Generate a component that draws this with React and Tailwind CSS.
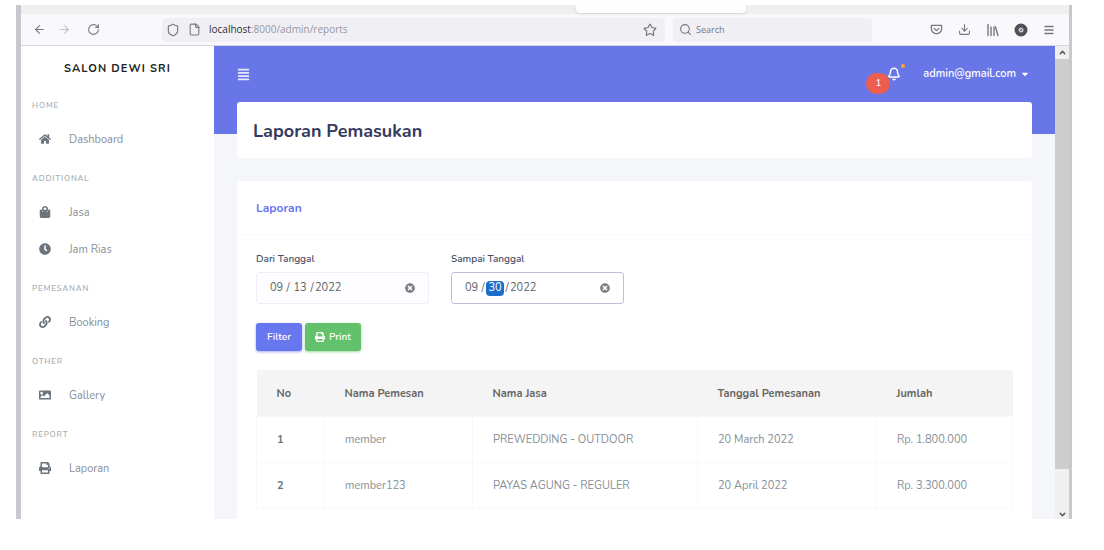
import {
  FaHome, FaShoppingBag, FaClock, FaLink, FaImage, FaPrint, FaAlignJustify, FaCaretDown, FaTimesCircle,
} from "react-icons/fa";
import {
  ArrowLeft, ArrowRight, RotateCw, Shield, File, Star, Search, Download, Menu, Bell, ChevronUp, ChevronDown,
} from "lucide-react";

const sections = [
  { title: "HOME", items: [{ name: "Dashboard", Icon: FaHome }] },
  { title: "ADDITIONAL", items: [{ name: "Jasa", Icon: FaShoppingBag }, { name: "Jam Rias", Icon: FaClock }] },
  { title: "PEMESANAN", items: [{ name: "Booking", Icon: FaLink }] },
  { title: "OTHER", items: [{ name: "Gallery", Icon: FaImage }] },
  { title: "REPORT", items: [{ name: "Laporan", Icon: FaPrint }] },
];

const rows = [
  ["1", "member", "PREWEDDING - OUTDOOR", "20 March 2022", "Rp. 1.800.000"],
  ["2", "member123", "PAYAS AGUNG - REGULER", "20 April 2022", "Rp. 3.300.000"],
];

function BrowserBar() {
  return (
    <div className="font-['Open_Sans',sans-serif]">
      <div className="flex h-[9px] bg-[#efefef]">
        <div className="w-[53%]" />
        <div className="mb-px w-[170px] rounded-b-sm bg-white shadow-sm" />
      </div>
      <div className="flex h-8 items-center border-b border-[#d5d5df] bg-[#f9f9fb] text-[#77777f]">
        <div className="flex w-[141px] items-center gap-3 pl-3">
          <button aria-label="Back"><ArrowLeft size={13} /></button>
          <button aria-label="Forward" className="text-[#c2c2c8]"><ArrowRight size={13} /></button>
          <button aria-label="Reload" className="ml-1"><RotateCw size={13} /></button>
        </div>
        <div className="flex h-6 flex-1 items-center gap-2 rounded-sm bg-[#f0f0f4] px-1">
          <Shield size={14} />
          <File size={13} />
          <a href="#url" className="flex-1 text-[10px] text-[#96969e]">
            <span className="text-[#2b2b33]">localhost</span>:8000/admin/reports
          </a>
          <button aria-label="Bookmark" className="mr-1"><Star size={14} /></button>
        </div>
        <label className="ml-2 flex h-6 w-[199px] items-center gap-1 rounded-sm bg-[#f0f0f4] pl-1.5">
          <Search size={13} />
          <input aria-label="Search" placeholder="Search" className="w-32 bg-transparent text-[9px] outline-none placeholder:text-[#77777f]" />
        </label>
        <div className="ml-[58px] flex items-center gap-[15px] pr-[14px]">
          <button aria-label="Pocket">
            <svg width="13" height="13" viewBox="0 0 14 14" fill="none" stroke="currentColor" strokeWidth="1.4" strokeLinecap="round" strokeLinejoin="round">
              <path d="M1.500 2.500h11v4a5.500 5 0 0 1-11 0z" /><path d="M4.500 6 7 8.200 9.500 6" />
            </svg>
          </button>
          <button aria-label="Downloads"><Download size={13} /></button>
          <button aria-label="Library">
            <svg width="13" height="14" viewBox="0 0 13 14" fill="none" stroke="currentColor" strokeWidth="1.4" strokeLinecap="round">
              <path d="M2 1.500v11M5 4v8.500M8 4v8.500M9.500 4l2.500 8.500" />
            </svg>
          </button>
          <button aria-label="Account">
            <svg width="14" height="14" viewBox="0 0 14 14">
              <circle cx="7" cy="7" r="6.500" fill="#505058" /><circle cx="7" cy="7" r="2.500" fill="#c9c9cf" />
              <path d="M5.800 8.300 8.200 5.700" stroke="#505058" />
            </svg>
          </button>
          <button aria-label="Menu"><Menu size={12} strokeWidth={3} /></button>
        </div>
      </div>
    </div>
  );
}

function Sidebar() {
  return (
    <nav className="w-[193px] shrink-0 bg-white">
      <h2 className="pb-[9px] pt-4 text-center text-[11px] font-bold leading-[14px] tracking-widest text-[#222]">SALON DEWI SRI</h2>
      {sections.map(({ title, items }) => (
        <section key={title}>
          <h3 className="pb-[7px] pl-[11px] pt-[13px] text-[8px] font-semibold leading-4 tracking-widest text-[#a9b0b5]">{title}</h3>
          {items.map(({ name, Icon }) => (
            <a key={name} href={`#${name}`} className="flex h-[37px] items-center pl-[18px] pt-0.5 text-[11px] text-[#868e96]">
              <Icon size={12} className="mb-1 mr-[18px] text-[#6c757d]" />
              {name}
            </a>
          ))}
        </section>
      ))}
    </nav>
  );
}

function DateField({ id, label, month, day, year, active }) {
  return (
    <div className="w-[173px]">
      <label htmlFor={id} className="block text-[10px] font-semibold leading-4 text-[#4a4f66]">{label}</label>
      <div className={`mt-[5px] flex h-8 items-center rounded-[3px] border px-[13px] text-[11px] text-[#5c6268] ${active ? "border-[#bcc0e0] bg-white" : "border-[#eceef8] bg-[#fdfdff]"}`}>
        <input id={id} defaultValue={month} className="w-[15px] bg-transparent outline-none" />
        <span className="w-[6px] text-center">/</span>
        <input aria-label={`${label} day`} defaultValue={day} className={`h-[15px] w-[18px] text-center outline-none ${active ? "rounded-sm bg-[#1a6fc9] text-white" : "bg-transparent"}`} />
        <span className="w-[6px] text-center">/</span>
        <input aria-label={`${label} year`} defaultValue={year} className="w-9 bg-transparent outline-none" />
        <button aria-label={`Clear ${label}`} className="ml-auto text-[#7b7f84]"><FaTimesCircle size={10} /></button>
      </div>
    </div>
  );
}

function Topbar() {
  return (
    <header className="flex h-14 items-center justify-between text-white">
      <button aria-label="Toggle sidebar" className="text-[#e6e9fd]"><FaAlignJustify size={13} /></button>
      <div className="flex items-center">
        <button aria-label="Notifications" className="relative mr-[22px]">
          <Bell size={14} strokeWidth={2.5} />
          <span className="absolute -right-1 -top-[3px] size-1 rounded-full bg-[#ffa426]" />
          <span className="absolute -left-[21px] top-[6px] flex h-[21px] w-6 items-center justify-center rounded-full bg-[#ec5e4e] text-[9px] font-semibold">1</span>
        </button>
        <button className="flex items-center gap-1 text-[11px] font-semibold">
          admin@gmail.com <FaCaretDown size={10} className="mr-0.5" />
        </button>
      </div>
    </header>
  );
}

export default function App() {
  return (
    <div className="bg-white pb-8 pl-4 pr-8 pt-[5px] font-['Nunito','Open_Sans',sans-serif]">
      <div className="border-l-[5px] border-r-[3px] border-[#c6cace]">
        <BrowserBar />
        <div className="flex">
          <Sidebar />
          <main className="min-w-0 flex-1 bg-[linear-gradient(#6876e8_88px,#f4f6f9_88px)] px-[23px]">
            <Topbar />
            <div className="flex h-14 items-center rounded-[3px] bg-white px-4 pt-0.5">
              <h1 className="text-lg font-bold text-[#34395e]">Laporan Pemasukan</h1>
            </div>
            <section className="mt-[23px] rounded-t-[3px] bg-white pb-[10px]">
              <h2 className="flex h-[54px] items-center border-b border-[#f9f9f9] px-[19px] text-[12px] font-bold text-[#6777ef]">Laporan</h2>
              <div className="px-[19px] pt-4">
                <div className="flex gap-[22px]">
                  <DateField id="from" label="Dari Tanggal" month="09" day="13" year="2022" />
                  <DateField id="to" label="Sampai Tanggal" month="09" day="30" year="2022" active />
                </div>
                <div className="mt-[19px] flex gap-[3px] text-[10px] font-semibold text-white">
                  <button className="h-7 w-[46px] rounded-[3px] bg-[#6777ef] shadow-sm shadow-[#acb5f6]">Filter</button>
                  <button className="flex h-7 w-14 items-center justify-center gap-1 rounded-[3px] bg-[#63c16b] shadow-sm shadow-[#a8dfac]"><FaPrint size={10} />Print</button>
                </div>
                <table className="mt-[19px] w-full table-fixed border-collapse text-left text-[11px] text-[#868e96]">
                  <thead className="bg-[#f4f4f4] text-[#666]">
                    <tr className="h-[46px]">
                      <th className="w-[68px] px-5 pt-0.5 font-bold">No</th>
                      <th className="w-[148px] px-5 pt-0.5 font-bold">Nama Pemesan</th>
                      <th className="w-[225px] px-5 pt-0.5 font-bold">Nama Jasa</th>
                      <th className="w-[179px] px-5 pt-0.5 font-bold">Tanggal Pemesanan</th>
                      <th className="px-5 pt-0.5 font-bold">Jumlah</th>
                    </tr>
                  </thead>
                  <tbody>
                    {rows.map(([no, ...cells]) => (
                      <tr key={no} className="h-[46px]">
                        <th className="border border-[#f8f8f8] px-5 pt-0.5 font-bold text-[#6c757d]">{no}</th>
                        {cells.map((cell) => <td key={cell} className="border border-[#f8f8f8] px-5 pt-0.5">{cell}</td>)}
                      </tr>
                    ))}
                  </tbody>
                </table>
              </div>
            </section>
          </main>
          <div className="flex w-[14px] shrink-0 flex-col items-center bg-[#f0f0f0] text-[#606060]">
            <button aria-label="Scroll up" className="flex h-[13px] items-center"><ChevronUp size={9} strokeWidth={4} /></button>
            <div className="w-full flex-1 bg-[#cdcdcd]" />
            <button aria-label="Scroll down" className="flex h-[50px] items-end"><ChevronDown size={9} strokeWidth={4} /></button>
          </div>
        </div>
      </div>
    </div>
  );
}
